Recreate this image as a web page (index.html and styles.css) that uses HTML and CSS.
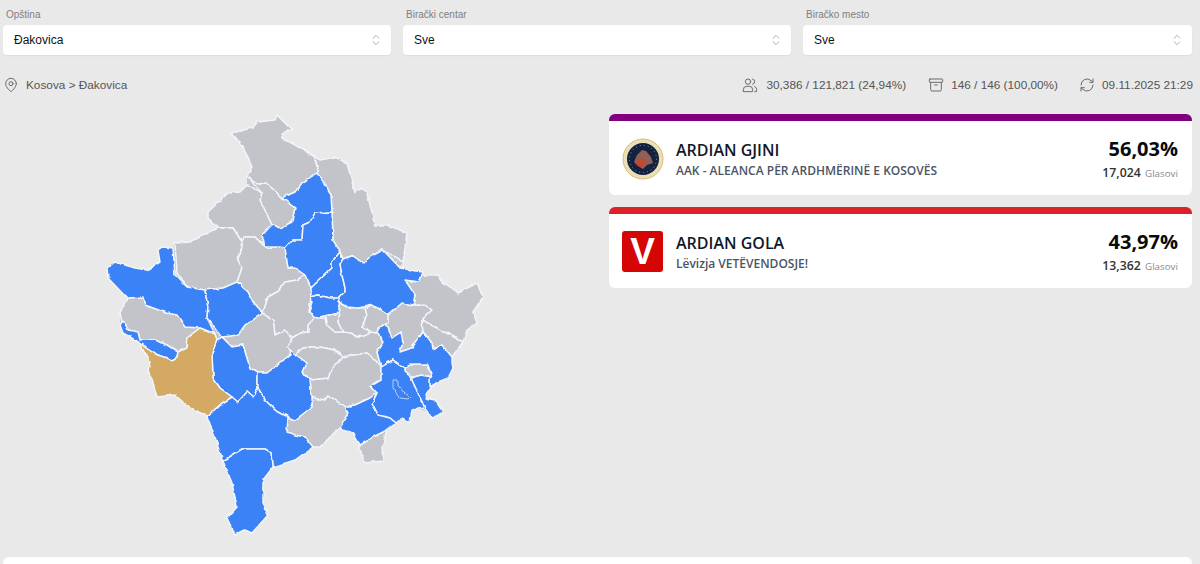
FILE: index.html
```html
<!DOCTYPE html>
<html lang="sr">
<head>
<meta charset="utf-8">
<title>Rezultati - Đakovica</title>
<link rel="stylesheet" href="styles.css">
</head>
<body>
<section class="filters">
  <div class="field">
    <div class="field-label">Opština</div>
    <div class="select"><span>Đakovica</span>
      <svg class="chev" viewBox="0 0 24 24"><path d="M7 15l5 5 5-5M7 9l5-5 5 5"/></svg>
    </div>
  </div>
  <div class="field">
    <div class="field-label">Birački centar</div>
    <div class="select"><span>Sve</span>
      <svg class="chev" viewBox="0 0 24 24"><path d="M7 15l5 5 5-5M7 9l5-5 5 5"/></svg>
    </div>
  </div>
  <div class="field">
    <div class="field-label">Biračko mesto</div>
    <div class="select"><span>Sve</span>
      <svg class="chev" viewBox="0 0 24 24"><path d="M7 15l5 5 5-5M7 9l5-5 5 5"/></svg>
    </div>
  </div>
</section>

<section class="meta">
  <div class="crumb">
    <svg class="ico" viewBox="0 0 24 24"><path d="M20 10c0 6-8 12-8 12s-8-6-8-12a8 8 0 0 1 16 0z"/><circle cx="12" cy="10" r="3"/></svg>
    <span>Kosova &gt; Đakovica</span>
  </div>
  <div class="stats">
    <div class="stat stat-voters">
      <svg class="ico" viewBox="0 0 24 24"><circle cx="9" cy="7" r="4"/><path d="M2 21v-2a5 5 0 0 1 5-5h4a5 5 0 0 1 5 5v2a1 1 0 0 1-1 1H3a1 1 0 0 1-1-1z"/><path d="M16 3.1a4 4 0 0 1 0 7.8M19 14.2a5 5 0 0 1 3 4.8v2a1 1 0 0 1-1 1h-2"/></svg>
      <span>30,386 / 121,821 (24,94%)</span>
    </div>
    <div class="stat">
      <svg class="ico" viewBox="0 0 24 24"><rect x="2" y="3" width="20" height="5" rx="1"/><path d="M4 8v11a2 2 0 0 0 2 2h12a2 2 0 0 0 2-2V8M10 12h4"/></svg>
      <span>146 / 146 (100,00%)</span>
    </div>
    <div class="stat">
      <svg class="ico" viewBox="0 0 24 24"><path d="M3 12a9 9 0 0 1 15-6.7L21 8M21 3v5h-5M21 12a9 9 0 0 1-15 6.7L3 16M8 16H3v5"/></svg>
      <span>09.11.2025 21:29</span>
    </div>
  </div>
</section>

<section class="main">
  <svg class="map" viewBox="3 107 600 440" aria-label="Mapa Kosova">
    <defs>
      <filter id="rough" x="-5%" y="-5%" width="110%" height="110%">
        <feTurbulence type="fractalNoise" baseFrequency="0.13" numOctaves="2" seed="4" result="n"/>
        <feDisplacementMap in="SourceGraphic" in2="n" scale="3.5" xChannelSelector="R" yChannelSelector="G"/>
      </filter>
    </defs>
    <g filter="url(#rough)">
    <polygon class="base" points="232,133 252,128 258,122 275,120 277,115 292,130 282,133 282,138 295,145 312,155 320,160 335,157 347,163 355,193 362,188 367,193 375,225 388,225 407,233 403,262 400,268 422,272 422,275 438,275 443,282 458,293 477,283 483,297 473,312 477,323 467,330 463,342 452,357 452,363 453,368 448,378 438,382 430,387 425,398 435,400 443,412 432,419 427,410 412,410 410,423 402,418 396,423 387,430 382,447 383,461 365,463 360,450 360,445 353,433 342,430 340,427 320,447 313,447 295,460 273,467 263,480 263,502 268,515 252,533 245,530 235,535 227,518 237,507 232,483 223,461 215,437 207,416 190,408 175,395 157,397 153,383 148,370 150,362 140,343 130,337 123,333 120,325 120,313 127,298 108,278 107,268 115,262 135,268 147,270 160,262 158,250 162,247 173,248 175,243 190,242 218,228 208,218 208,212 228,193 240,192 247,185 247,177 252,167 243,147"/>
    <g class="gray">
      <polygon points="232,133 252,128 258,122 275,120 277,115 292,130 282,133 282,138 295,145 312,155 318,165 317,173 302,183 295,192 282,198 277,193 265,182 258,185 247,177 252,167 243,147"/>
      <polygon points="247,177 258,185 265,182 277,193 282,198 295,208 292,222 280,228 272,225 260,200 262,193"/>
      <polygon points="208,212 228,193 240,192 247,185 262,193 260,200 272,225 262,235 265,247 255,237 243,237 242,242 233,228 218,228 208,218"/>
      <polygon points="312,155 320,160 335,157 347,163 355,193 362,188 367,193 375,225 388,225 407,233 403,262 383,250 370,257 363,263 353,256 343,260 340,252 333,240 332,212 331,195 317,173 318,165"/>
      <polygon points="175,243 190,242 218,228 233,228 242,242 238,260 242,268 237,282 223,288 205,290 187,287 177,273"/>
      <polygon points="242,242 243,237 255,237 265,247 280,247 285,248 288,268 295,268 305,275 297,280 285,282 277,292 268,297 263,313 253,302 248,292 237,282 242,268 238,260"/>
      <polygon points="305,275 311,288 311,297 309,312 315,318 308,325 308,332 300,333 292,338 285,330 275,335 273,320 263,313 268,297 277,292 285,282 297,280"/>
      <polygon points="120,313 127,298 143,297 145,305 167,313 177,315 185,327 200,328 188,337 187,348 178,352 167,345 155,340 140,340 138,332 128,330 125,322 122,322"/>
      <polygon points="222,337 238,335 245,325 263,313 273,320 275,335 285,330 292,338 287,347 291,350 290,355 280,363 267,373 258,373 250,368 243,345 232,347"/>
      <polygon points="315,318 325,318 327,325 335,332 343,332 350,333 358,337 372,332 377,333 378,330 383,342 377,352 381,367 375,360 367,353 342,357 335,350 320,347 310,347 300,350 296,355 291,350 287,347 292,338 300,333 308,332 308,325"/>
      <polygon points="328,315 340,313 338,322 343,332 335,332 327,325 325,318"/>
      <polygon points="338,302 347,307 358,308 365,308 367,315 362,327 372,332 358,337 350,333 343,332 338,322 340,313"/>
      <polygon points="365,308 373,305 388,315 388,323 378,328 377,333 372,332 362,327 367,315"/>
      <polygon points="388,323 388,315 402,303 413,305 425,305 432,310 422,320 423,332 412,348 400,352 403,342 401,332 392,338 388,327 385,325"/>
      <polygon points="405,280 418,282 422,275 438,275 443,282 458,293 477,283 483,297 473,312 477,323 467,330 463,342 422,320 432,310 425,305 413,305 415,295"/>
      <polygon points="422,320 463,342 452,357 442,345 433,350 432,343 423,332"/>
      <polygon points="405,368 410,365 428,365 432,377 420,375 412,378 405,372"/>
      <polygon points="342,357 367,353 375,360 381,367 381,380 371,386 377,393 370,398 355,405 345,407 328,395 325,400 312,398 310,380 328,378 333,368"/>
      <polygon points="300,350 310,347 320,347 335,350 342,357 333,368 328,378 310,380 303,372 307,363 296,355"/>
      <polygon points="312,398 325,400 328,395 345,407 348,413 340,427 320,447 313,447 305,437 295,435 287,432 288,417 295,420 312,407"/>
      <polygon points="387,430 382,447 383,461 365,463 360,450 360,445 367,441 373,437"/>
    </g>
    <g class="blue">
      <polygon points="317,173 331,195 332,212 315,213 310,222 303,225 302,240 292,240 285,248 280,247 265,247 262,235 272,225 280,228 292,222 295,208 282,198 295,192 302,183"/>
      <polygon points="315,213 332,212 333,240 340,252 332,262 332,268 311,288 305,275 295,268 288,268 285,248 292,240 302,240 303,225 310,222"/>
      <polygon points="340,252 343,260 340,265 345,288 345,292 340,298 330,298 318,295 311,297 311,288 332,268 332,262"/>
      <polygon points="318,295 330,298 340,298 338,302 340,313 328,315 315,318 309,312 312,302 311,297"/>
      <polygon points="340,265 343,260 353,256 363,263 370,257 383,250 400,268 422,272 418,282 405,280 415,295 413,305 402,303 388,315 373,305 358,308 347,307 338,302 340,298 345,292 345,288"/>
      <polygon points="162,247 173,248 175,275 187,287 205,290 208,307 207,318 215,334 200,328 185,327 177,315 167,313 145,305 143,297 127,298 108,278 107,268 115,262 135,268 147,270 160,262 158,250"/>
      <polygon points="122,322 125,322 128,330 138,332 140,340 155,340 167,345 178,352 177,357 172,360 158,355 140,343 130,337 123,333 120,325"/>
      <polygon points="205,290 223,288 237,282 248,292 253,302 263,313 245,325 238,335 222,337 217,330 207,318 208,307"/>
      <polygon points="222,337 232,347 243,345 250,368 258,373 258,388 253,397 247,392 238,402 232,397 220,388 213,378 212,353 217,340"/>
      <polygon points="258,373 267,373 280,363 290,355 291,350 296,355 307,363 303,372 310,380 312,398 312,407 295,420 288,417 275,410 265,400 258,388"/>
      <polygon points="207,416 222,403 232,397 238,402 247,392 253,397 258,388 265,400 275,410 288,417 287,432 295,435 305,437 313,447 295,460 273,467 272,453 265,449 242,449 223,461 215,437"/>
      <polygon points="223,461 242,449 265,449 272,453 273,467 263,480 263,502 268,515 252,533 245,530 235,535 227,518 237,507 232,483"/>
      <polygon points="378,330 385,325 388,327 392,338 401,332 403,342 400,352 412,348 423,332 432,343 433,350 442,345 452,357 452,363 453,368 448,378 438,382 430,387 430,378 432,377 428,365 410,365 405,368 393,360 381,367 377,352 383,342"/>
      <polygon points="393,360 405,368 405,372 412,378 412,380 425,408 412,410 410,423 402,418 396,423 390,418 378,415 372,403 377,393 371,386 381,380 381,367"/>
      <polygon points="412,378 420,375 432,377 430,378 430,387 425,398 435,400 443,412 432,419 427,410 425,408 412,380"/>
      <polygon points="377,393 372,403 378,415 390,418 396,423 387,430 373,437 367,441 360,445 353,433 342,430 340,427 348,413 345,407 355,405 370,398"/>
      <polygon class="lake" points="393,380 398,380 398,387 410,397 408,399 400,398 393,388"/>
    </g>
    <polygon class="gold" points="140,343 158,355 172,360 177,357 178,352 187,348 188,337 200,328 215,334 217,340 212,353 213,378 220,388 232,397 222,403 207,416 190,408 175,395 157,397 153,383 148,370 150,362"/>
    </g>
  </svg>

  <div class="results">
    <article class="card purple">
      <div class="card-body">
        <svg class="aak" viewBox="0 0 42 42">
          <circle cx="21" cy="21" r="20" fill="#eadfb8" stroke="#d9bd72"/>
          <circle cx="21" cy="21" r="16" fill="#14213f"/>
          <circle cx="21" cy="21" r="13.5" fill="none" stroke="#8f96a8" stroke-width="1" stroke-dasharray="1 3"/>
          <polygon points="12,24 15,17 20,12 24,13 29,19 31,25 25,27 21,31 16,28" fill="#8f5f58"/>
          <polygon points="13,25 19,20 24,24 20,29 16,28" fill="#c8452f"/>
        </svg>
        <div class="who">
          <div class="name">ARDIAN GJINI</div>
          <div class="party">AAK - ALEANCA PËR ARDHMËRINË E KOSOVËS</div>
        </div>
        <div class="score">
          <div class="pct">56,03%</div>
          <div class="votes"><b>17,024</b> <span>Glasovi</span></div>
        </div>
      </div>
    </article>
    <article class="card red">
      <div class="card-body">
        <div class="vv">V</div>
        <div class="who">
          <div class="name">ARDIAN GOLA</div>
          <div class="party">Lëvizja VETËVENDOSJE!</div>
        </div>
        <div class="score">
          <div class="pct">43,97%</div>
          <div class="votes"><b>13,362</b> <span>Glasovi</span></div>
        </div>
      </div>
    </article>
  </div>
</section>

<section class="bottom-card"></section>
</body>
</html>
```

FILE: styles.css
```css
* { box-sizing: border-box; }
html, body { height: 100%; overflow: hidden; }
body {
  margin: 0;
  padding: 9px 8px 0 3px;
  background: #e9e9e9;
  font-family: "Liberation Sans", Arial, sans-serif;
  color: #111;
}
.filters {
  display: grid;
  grid-template-columns: 388px 388px 389px;
  gap: 12px;
}
.field-label {
  font-size: 10px;
  line-height: 12px;
  color: #808080;
  margin-left: 3px;
  margin-bottom: 4px;
}
.select {
  height: 30px;
  background: #fff;
  border-radius: 4px;
  box-shadow: 0 1px 2px rgba(0,0,0,.06);
  display: flex;
  align-items: center;
  justify-content: space-between;
  padding: 0 8px 0 11px;
  font-size: 12px;
  color: #111;
}
.chev {
  width: 14px;
  height: 14px;
  fill: none;
  stroke: #a8a8a8;
  stroke-width: 1.6;
  stroke-linecap: round;
  stroke-linejoin: round;
}
.meta {
  display: flex;
  justify-content: space-between;
  align-items: center;
  height: 16px;
  margin-top: 22px;
  font-size: 11.8px;
  color: #555;
}
.crumb { display: flex; align-items: center; gap: 7px; }
.stats { display: flex; gap: 21px; margin-right: -1px; }
.stat { display: flex; align-items: center; gap: 7px; }
.stat-voters { margin-right: 1px; gap: 8px; }
.ico {
  width: 16px;
  height: 16px;
  fill: none;
  stroke: #6b6b6b;
  stroke-width: 1.5;
  stroke-linecap: round;
  stroke-linejoin: round;
}
.main {
  display: flex;
  margin-top: 14px;
}
.map {
  display: block;
  width: 600px;
  height: 440px;
  flex: none;
}
.map polygon { stroke: #f2f5fb; stroke-width: 1.5; stroke-linejoin: round; }
.map polygon.base { fill: #c2c4c9; stroke: none; }
.gray polygon { fill: #c2c4c9; }
.blue polygon { fill: #3b82f6; }
.blue polygon.lake { fill: none; stroke: #b9d3fb; stroke-width: 1; }
.map polygon.gold { fill: #d4a964; }
.results {
  flex: 1;
  margin-left: 6px;
  margin-top: 7px;
  display: flex;
  flex-direction: column;
  gap: 12px;
}
.card {
  height: 81px;
  background: #fff;
  border-radius: 6px;
  border-top: 7px solid;
  font-family: "Open Sans", sans-serif;
}
.purple { border-top-color: #800080; }
.red { border-top-color: #dc2229; }
.card-body {
  height: 100%;
  display: flex;
  align-items: center;
  padding: 0 14px 0 13px;
}
.aak { width: 42px; height: 42px; flex: none; margin-top: 1px; }
.vv {
  width: 41px;
  height: 41px;
  flex: none;
  background: #d60505;
  border-radius: 3px;
  color: #fff;
  font-family: "Liberation Sans", sans-serif;
  font-weight: 700;
  font-size: 37px;
  line-height: 41px;
  text-align: center;
}
.who { margin: 3px 0 0 12px; flex: 1; }
.name {
  font-size: 16px;
  line-height: 20px;
  font-weight: 600;
  color: #111827;
}
.party {
  margin-top: 3px;
  font-size: 12px;
  line-height: 16px;
  font-weight: 600;
  color: #4b5563;
}
.vv + .who { margin-left: 13px; }
.score { text-align: right; margin-top: 2px; }
.pct {
  font-size: 20px;
  line-height: 26px;
  font-weight: 700;
  color: #0a0a0a;
}
.votes { margin-top: 2px; font-size: 12.3px; line-height: 18px; color: #333; }
.votes b { font-weight: 600; }
.votes span { font-size: 9.8px; color: #8a8a8a; margin-left: 1px; }
.bottom-card {
  height: 40px;
  margin-top: 10px;
  background: #fff;
  border-radius: 6px;
}
```
